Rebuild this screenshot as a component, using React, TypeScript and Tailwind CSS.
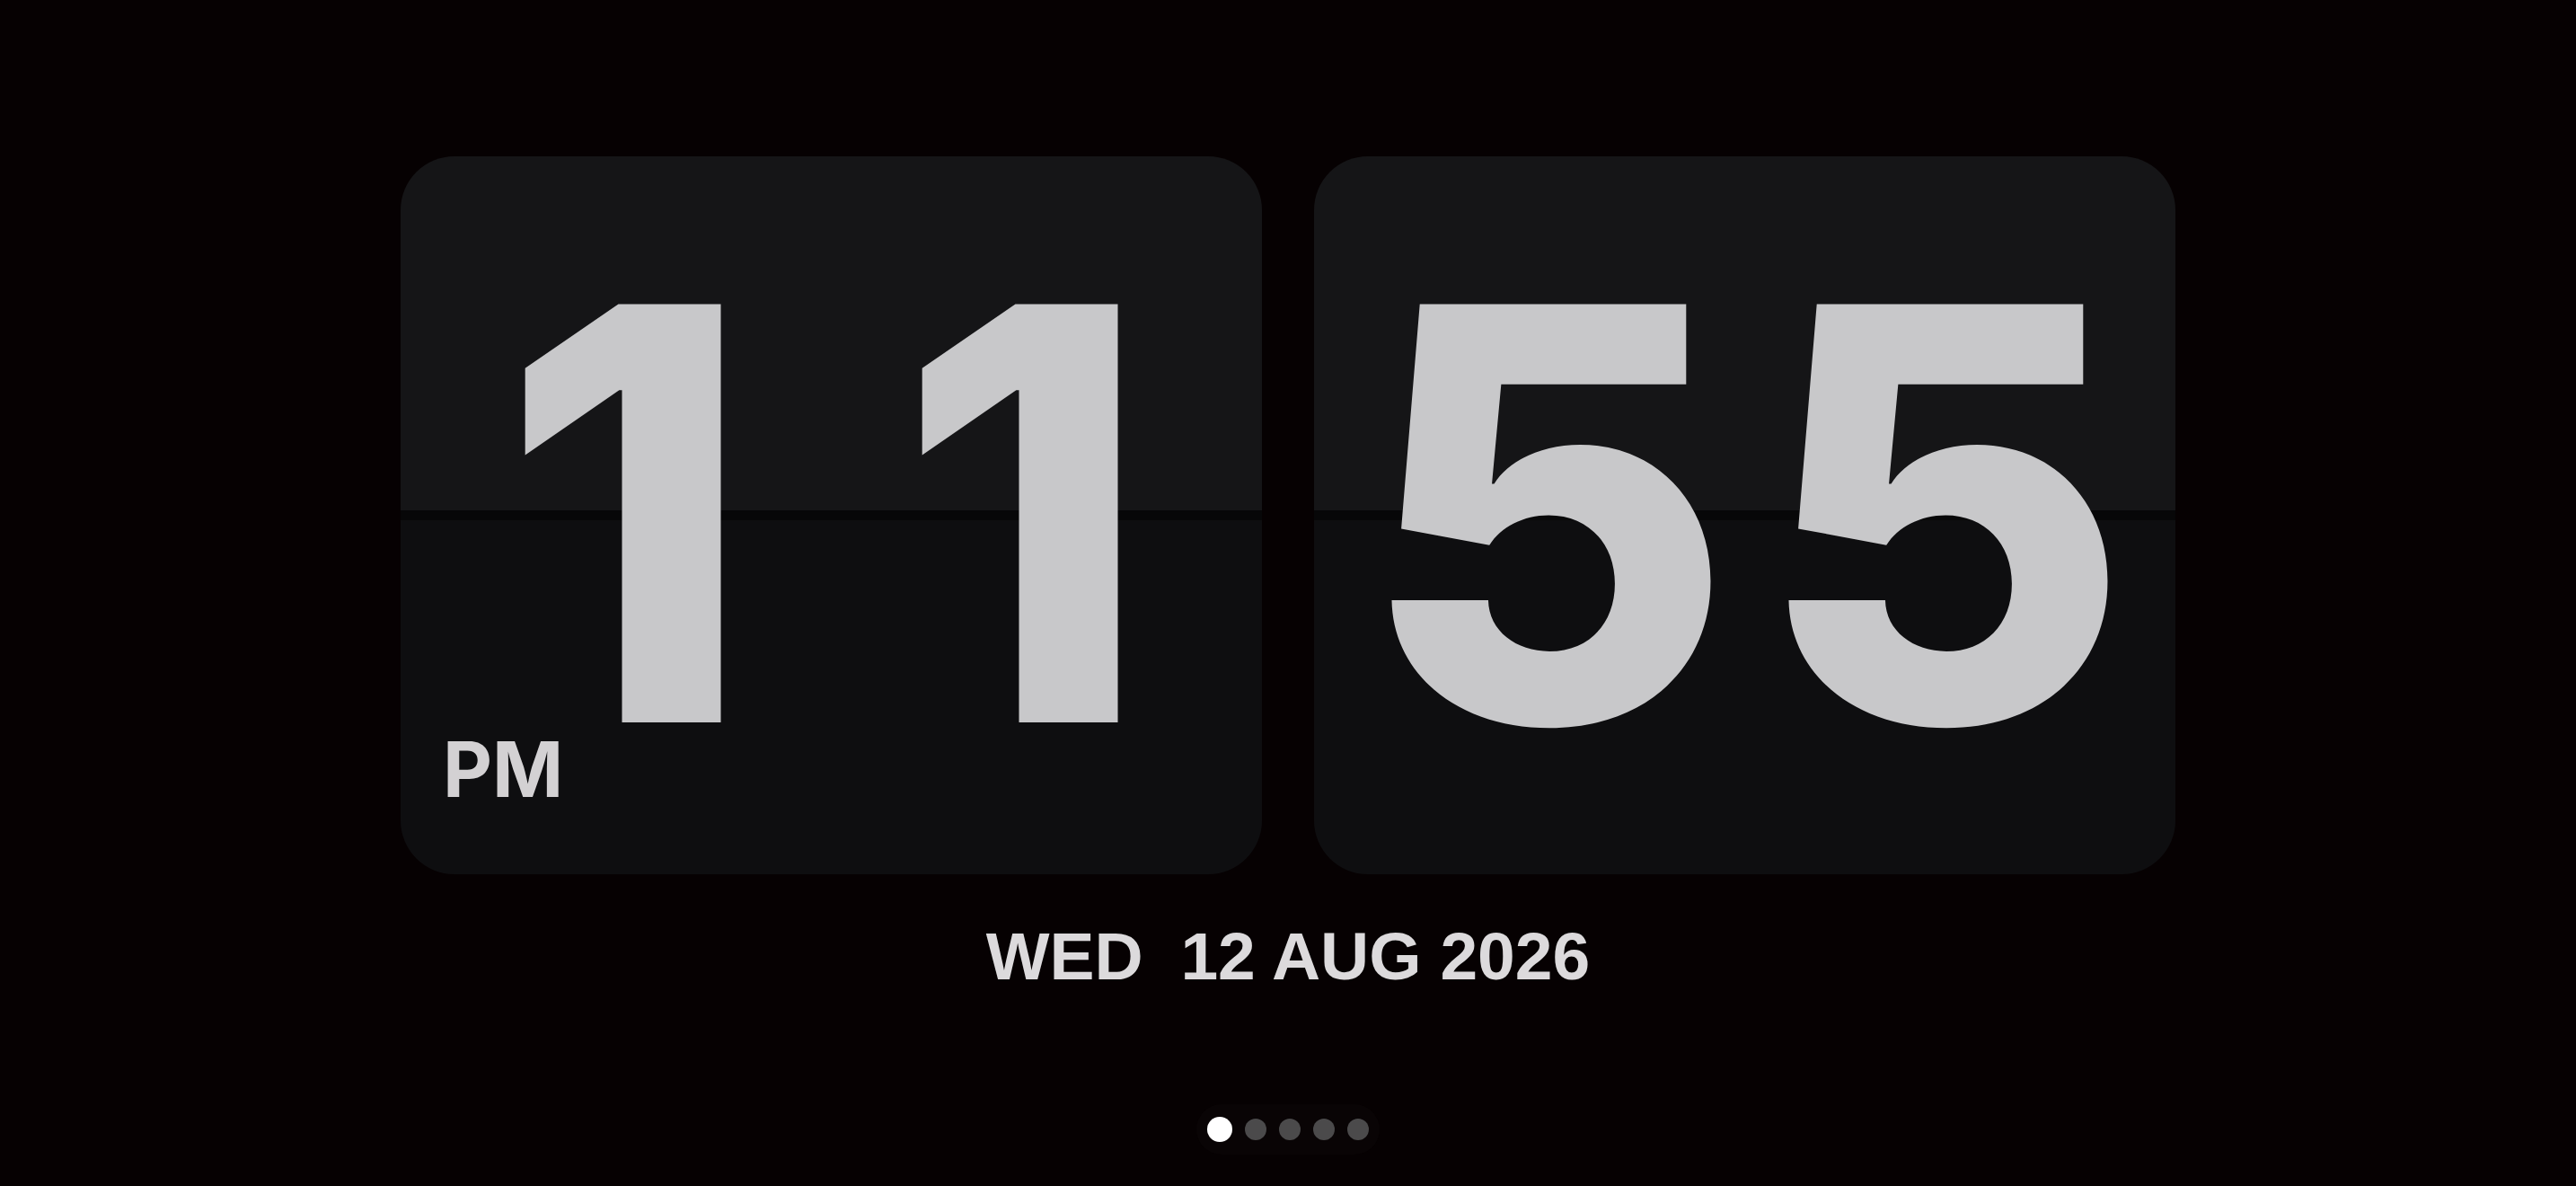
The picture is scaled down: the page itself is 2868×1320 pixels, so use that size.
const digitCls =
  'w-[442px] text-center text-[640px] leading-[0.75] font-extrabold text-[#c8c8ca]'

const cardCls =
  'w-[959px] h-[799px] rounded-[60px] overflow-hidden flex flex-col pt-[157px] ' +
  'bg-[linear-gradient(to_bottom,#151517_0%,#151517_49.25%,#070708_49.25%,#070708_50.75%,#0e0e10_50.75%,#0e0e10_100%)]'

function FlipCard({ digits, meridiem, shift }: { digits: string; meridiem?: string; shift?: string }) {
  return (
    <div className={cardCls}>
      <div className={'h-[480px] flex justify-center ' + (shift ?? '')}>
        {digits.split('').map((d, i) => (
          <span key={i} className={digitCls}>
            {d}
          </span>
        ))}
      </div>
      {meridiem && (
        <span className="mt-[3px] ml-[47px] text-[85px] leading-none font-bold text-[#d3d1d3]">
          {meridiem}
        </span>
      )}
    </div>
  )
}

export default function App() {
  const pages = [true, false, false, false, false]

  return (
    <div
      className="w-[2868px] h-[1320px] bg-[#060102] flex flex-col items-center pt-[174px]"
      style={{ fontFamily: 'Inter, "Noto Sans", sans-serif' }}
    >
      <div className="flex gap-[58px]">
        <FlipCard digits="11" meridiem="PM" shift="pr-[14px]" />
        <FlipCard digits="55" />
      </div>

      <p
        className="mt-[54px] text-[75px] leading-none font-bold text-[#dcdadc] whitespace-pre"
        style={{ fontFamily: '"Liberation Sans", Arial, sans-serif' }}
      >
        WED  12 AUG 2026
      </p>

      <div className="mt-[127px] flex items-center gap-[14px] px-[12px] py-[14px] rounded-full bg-[#090405]">
        {pages.map((active, i) =>
          active ? (
            <span key={i} className="w-[28px] h-[28px] rounded-full bg-white" />
          ) : (
            <span key={i} className="w-[24px] h-[24px] rounded-full bg-[#4b4a4b]" />
          )
        )}
      </div>
    </div>
  )
}
